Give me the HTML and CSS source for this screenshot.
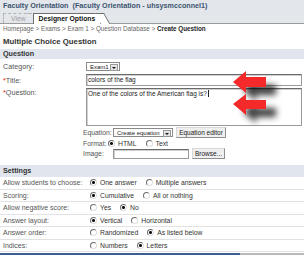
FILE: index.html
```html
<!DOCTYPE html>
<html>
<head>
  <meta charset="UTF-8">
  <title>Create Question</title>
  <link rel="stylesheet" href="styles.css">
</head>
<body>
  <div class="titlebar">Faculty Orientation&nbsp; (Faculty Orientation - uhsysmcconnel1)</div>
  <div class="tabs">
    <span class="tab">View</span>
    <span class="tab active">Designer Options</span>
  </div>
  <div class="crumbs">Homepage &gt; Exams &gt; Exam 1 &gt; Question Database &gt; <b>Create Question</b></div>
  <h1>Multiple Choice Question</h1>

  <div class="bar">Question</div>
  <div class="row r-cat">
    <span class="label">Category:</span>
    <span class="select s-cat">Exam1<i class="drop"></i></span>
  </div>
  <div class="row r-title">
    <span class="label"><span class="req">*</span>Title:</span>
    <span class="field">colors of the flag</span>
  </div>
  <div class="row r-question">
    <span class="label"><span class="req">*</span>Question:</span>
    <span class="field area">One of the colors of the American flag is?<i class="caret"></i></span>
  </div>
  <div class="sub r-eq">
    <span class="sublabel">Equation:</span>
    <span class="select s-eq">Create equation<i class="drop"></i></span>
    <span class="button b-eq">Equation editor</span>
  </div>
  <div class="sub r-format">
    <span class="sublabel">Format:</span>
    <span class="opt"><i class="radio on"></i>HTML</span>
    <span class="opt"><i class="radio"></i>Text</span>
  </div>
  <div class="sub r-image">
    <span class="sublabel">Image:</span>
    <span class="field f-image"></span>
    <span class="button b-browse">Browse...</span>
  </div>

  <div class="bar settings">Settings</div>
  <div class="srow">
    <span class="slabel">Allow students to choose:</span>
    <span class="opt"><i class="radio on"></i>One answer</span>
    <span class="opt"><i class="radio"></i>Multiple answers</span>
  </div>
  <div class="srow">
    <span class="slabel">Scoring:</span>
    <span class="opt"><i class="radio on"></i>Cumulative</span>
    <span class="opt"><i class="radio"></i>All or nothing</span>
  </div>
  <div class="srow">
    <span class="slabel">Allow negative score:</span>
    <span class="opt"><i class="radio"></i>Yes</span>
    <span class="opt"><i class="radio on"></i>No</span>
  </div>
  <div class="srow">
    <span class="slabel">Answer layout:</span>
    <span class="opt"><i class="radio on"></i>Vertical</span>
    <span class="opt"><i class="radio"></i>Horizontal</span>
  </div>
  <div class="srow">
    <span class="slabel">Answer order:</span>
    <span class="opt"><i class="radio"></i>Randomized</span>
    <span class="opt"><i class="radio on"></i>As listed below</span>
  </div>
  <div class="srow">
    <span class="slabel">Indices:</span>
    <span class="opt"><i class="radio"></i>Numbers</span>
    <span class="opt"><i class="radio on"></i>Letters</span>
  </div>
  <div class="taskbar"></div>

  <!-- annotation arrows drawn over the form -->
  <svg class="arrows" width="78" height="72" viewBox="0 0 78 72">
    <defs>
      <filter id="shade" x="-30%" y="-30%" width="180%" height="180%">
        <feDropShadow dx="10" dy="8" stdDeviation="3" flood-color="#000" flood-opacity="0.75"/>
      </filter>
    </defs>
    <polygon filter="url(#shade)" fill="#f42a2a" points="7,18 20,7 20,13 40,13 40,23 20,23 20,29"/>
    <polygon filter="url(#shade)" fill="#f42a2a" points="7,40 20,30 20,36 40,36 40,45 20,45 20,51"/>
  </svg>
</body>
</html>
```

FILE: styles.css
```css
body {
  margin: 0;
  width: 304px;
  height: 255px;
  overflow: hidden;
  position: relative;
  background: #fff;
  color: #333;
  font-family: "Liberation Sans", Arial, sans-serif;
}

.titlebar {
  height: 12px;
  line-height: 12px;
  padding-left: 3px;
  font-size: 7.2px;
  font-weight: bold;
  color: #3b5470;
  background: #e3e6ea;
  white-space: nowrap;
}

.tabs {
  display: flex;
  align-items: flex-end;
  height: 10px;
  padding: 1px 0 0 3px;
  background: #e3e6ea;
  border-bottom: 1px solid #9a9a9a;
}
.tab {
  position: relative;
  height: 9px;
  line-height: 9px;
  padding: 0 6px 0 7px;
  font-size: 6.8px;
  color: #a0a0a0;
  border-top: 1px dashed #b5b5b5;
  border-left: 1px dashed #b5b5b5;
}
.tab::after {
  content: "";
  position: absolute;
  top: -1px;
  bottom: 0;
  right: -4px;
  width: 8px;
  background: inherit;
  border-top: inherit;
  border-right: 1px dashed #b5b5b5;
  transform: skewX(30deg);
  transform-origin: top;
}
.tab.active {
  z-index: 1;
  margin-bottom: -1px;
  height: 10px;
  padding: 0 5px 0 5px;
  margin-left: 1px;
  font-weight: bold;
  color: #111;
  background: #fff;
  border-top: 1px solid #6f6f6f;
  border-left: 1px solid #6f6f6f;
}
.tab.active::after {
  border-right: 1px solid #6f6f6f;
}

.crumbs {
  height: 10px;
  line-height: 10px;
  padding-left: 3px;
  font-size: 6.3px;
  color: #666;
  white-space: nowrap;
}
.crumbs b {
  color: #222;
}

h1 {
  margin: 0 0 1px;
  padding: 2px 3px 0;
  line-height: 12px;
  font-size: 7.8px;
  color: #333;
}

.bar {
  height: 10px;
  line-height: 10px;
  padding-left: 3px;
  font-size: 7.2px;
  font-weight: bold;
  color: #333;
  background: #e1e6ee;
}
.bar.settings {
  margin-top: 6px;
  height: 12px;
  line-height: 12px;
}

.row {
  display: flex;
  align-items: center;
  padding: 0 2px 0 3px;
}
.label {
  width: 83px;
  flex-shrink: 0;
  font-size: 7.2px;
  color: #555;
}
.req {
  color: #e42020;
}
.r-cat { height: 14px; }
.r-title { height: 14px; }
.r-question {
  height: 40px;
  align-items: flex-start;
}
.r-question .label {
  line-height: 12px;
}

.field {
  flex: 1;
  height: 12px;
  line-height: 10px;
  padding-left: 1px;
  font-size: 6.5px;
  color: #222;
  background: #fff;
  border: 1px solid #9a9a9a;
  border-top-color: #6a6a6a;
  box-shadow: inset 1px 1px 0 #d0d0d0;
  box-sizing: border-box;
  white-space: nowrap;
}
.field.area {
  height: 38px;
  margin-top: 1px;
}
.caret {
  display: inline-block;
  width: 1px;
  height: 7px;
  margin-left: 1px;
  vertical-align: -1px;
  background: #222;
}

.select {
  position: relative;
  display: inline-block;
  flex-shrink: 0;
  height: 9px;
  line-height: 8px;
  padding-left: 3px;
  font-size: 6px;
  color: #222;
  background: #fff;
  border: 1px solid #8a8a8a;
  box-sizing: border-box;
  white-space: nowrap;
}
.s-cat { width: 34px; }
.s-eq { width: 60px; }
.drop {
  position: absolute;
  top: 1px;
  right: 1px;
  width: 6px;
  height: 5px;
  background: #e4e4e4;
  border: 1px solid #999;
}
.drop::after {
  content: "";
  position: absolute;
  left: 1px;
  top: 2px;
  border-left: 2px solid transparent;
  border-right: 2px solid transparent;
  border-top: 2px solid #111;
}

.button {
  display: inline-block;
  flex-shrink: 0;
  height: 11px;
  line-height: 9px;
  font-size: 6.5px;
  text-align: center;
  color: #222;
  background: #efefef;
  border: 1px solid #8f8f8f;
  border-top-color: #d8d8d8;
  border-left-color: #d8d8d8;
  box-sizing: border-box;
  white-space: nowrap;
}
.b-eq { width: 50px; margin-left: 3px; }
.b-browse { width: 33px; margin-left: 3px; }

.sub {
  display: flex;
  align-items: center;
  padding-left: 83px;
}
.sublabel {
  flex-shrink: 0;
  font-size: 6.8px;
  color: #555;
  white-space: nowrap;
}
.r-eq { height: 11px; }
.r-eq .sublabel { width: 30px; }
.r-format { height: 10px; }
.r-format .sublabel { width: 25px; }
.r-image { height: 11px; }
.r-image .sublabel { width: 30px; }
.f-image {
  flex: none;
  width: 76px;
  height: 10px;
}

.opt {
  display: inline-flex;
  align-items: center;
  margin-right: 9px;
  font-size: 6.8px;
  color: #333;
  white-space: nowrap;
}
.radio {
  width: 5px;
  height: 5px;
  margin-right: 3px;
  border: 1px solid;
  border-color: #6e6e6e #dedede #dedede #6e6e6e;
  border-radius: 50%;
  background: #fff;
}
.radio.on {
  background: radial-gradient(circle, #111 0 1.3px, #fff 1.6px);
}

.srow {
  display: flex;
  align-items: center;
  height: 11.5px;
  padding-left: 3px;
  border-bottom: 1px solid #e2e2e2;
}
.slabel {
  width: 87px;
  flex-shrink: 0;
  font-size: 7px;
  color: #555;
}

.taskbar {
  height: 2px;
  margin-top: 1px;
  background: linear-gradient(to right, #3d5e94 0 240px, #b9b9b9 240px);
}

.arrows {
  position: absolute;
  left: 226px;
  top: 64px;
}
```
